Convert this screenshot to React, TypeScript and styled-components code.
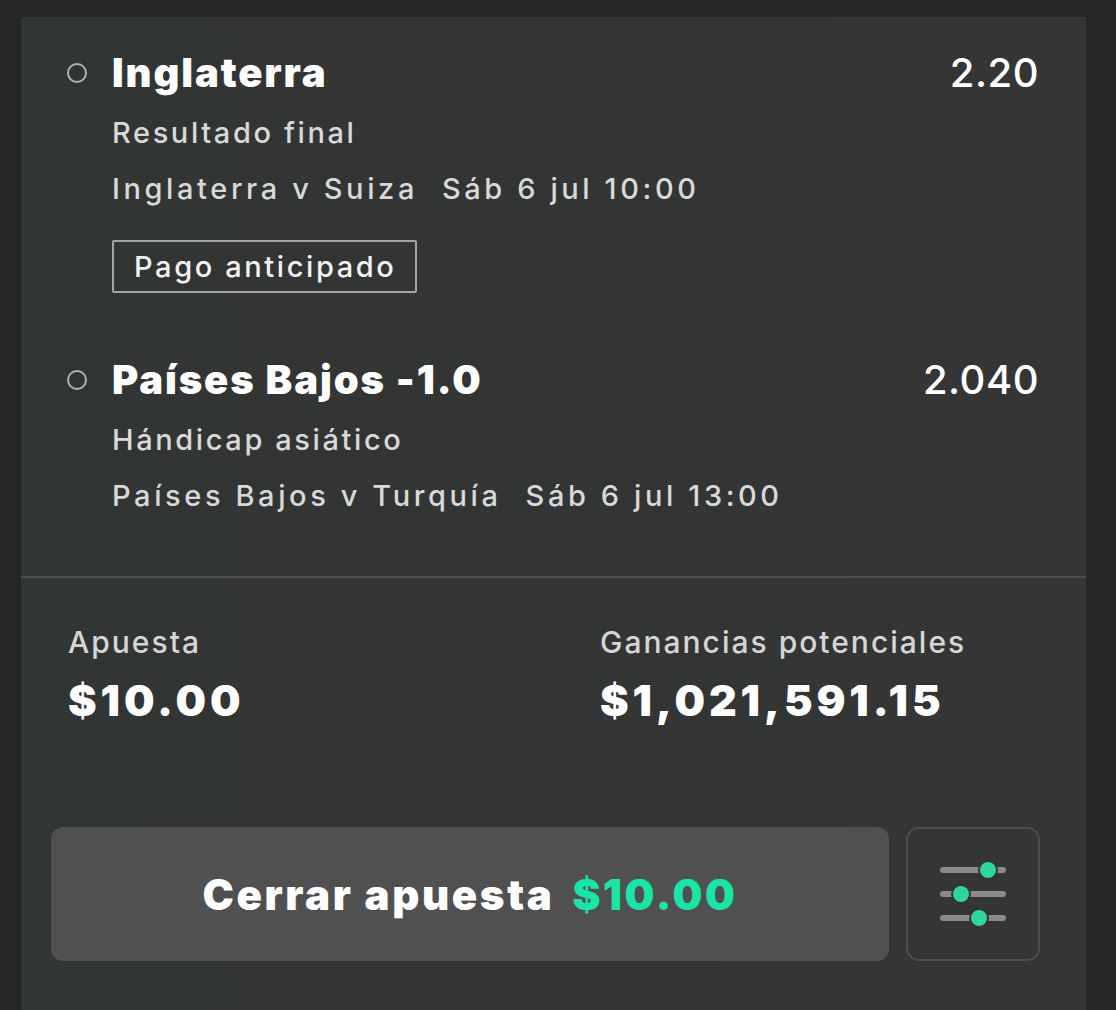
import styled, { createGlobalStyle } from 'styled-components';

// Data for the bet slip
interface Selection {
  name: string;
  odds: string;
  market: string;
  match: string;
  kickoff: string;
  tag?: string;
}

const selections: Selection[] = [
  {
    name: 'Inglaterra',
    odds: '2.20',
    market: 'Resultado final',
    match: 'Inglaterra v Suiza',
    kickoff: 'Sáb 6 jul 10:00',
    tag: 'Pago anticipado',
  },
  {
    name: 'Países Bajos -1.0',
    odds: '2.040',
    market: 'Hándicap asiático',
    match: 'Países Bajos v Turquía',
    kickoff: 'Sáb 6 jul 13:00',
  },
];

const GlobalStyle = createGlobalStyle`
  html, body {
    margin: 0;
    padding: 0;
    background: #262626;
  }
  body {
    font-family: Inter, "Noto Sans", "Liberation Sans", sans-serif;
    color: #ffffff;
    -webkit-font-smoothing: antialiased;
  }
`;

// Styled Components
const Page = styled.div`
  padding: 17px 30px 0 21px;
  height: 1010px;
  box-sizing: border-box;
  overflow: hidden;
`;

const Panel = styled.div`
  width: 1065px;
  min-height: 993px;
  background: linear-gradient(90deg, #313534 0%, #333534 60%, #353535 100%);
`;

const SelectionList = styled.div`
  padding: 32px 47px 52px 46px;
  display: flex;
  flex-direction: column;
  gap: 63px;
`;

const SelectionItem = styled.div`
  display: grid;
  grid-template-columns: 20px 1fr auto;
  column-gap: 25px;
`;

const Radio = styled.span`
  width: 20px;
  height: 20px;
  box-sizing: border-box;
  border: 2.5px solid #b2b2b2;
  border-radius: 50%;
  align-self: center;
`;

const Title = styled.div`
  font-size: 40px;
  line-height: 48px;
  font-weight: 900;
  letter-spacing: 1.9px;
`;

const Odds = styled.div`
  font-size: 40px;
  line-height: 48px;
  font-weight: 500;
  letter-spacing: 0.5px;
`;

const Details = styled.div`
  grid-column: 2 / 4;
  margin-top: 8px;
  display: flex;
  flex-direction: column;
  align-items: flex-start;
`;

const InfoLine = styled.div<{ $wide?: boolean }>`
  font-size: 29px;
  line-height: 56px;
  font-weight: 500;
  color: #d9d9d9;
  letter-spacing: ${(p) => (p.$wide ? '3.6px' : '2.6px')};
  display: flex;
  gap: 24px;
`;

const Tag = styled.span`
  margin-top: 23px;
  border: 2px solid #a3a3a3;
  border-radius: 2px;
  padding: 6px 19px 6px 20px;
  font-size: 29px;
  line-height: 37px;
  font-weight: 500;
  color: #f2f2f2;
  letter-spacing: 2.6px;
`;

const Divider = styled.hr`
  margin: 0;
  border: none;
  height: 2px;
  background: #4b4e4d;
`;

const Summary = styled.div`
  display: grid;
  grid-template-columns: 532px 1fr;
  padding: 44px 47px 0;
`;

const SummaryCell = styled.div`
  display: flex;
  flex-direction: column;
  gap: 13px;
`;

const Label = styled.div`
  font-size: 30px;
  line-height: 40px;
  font-weight: 500;
  color: #d6d6d6;
  letter-spacing: 2px;
`;

const Amount = styled.div`
  font-size: 43px;
  line-height: 51px;
  font-weight: 900;
  letter-spacing: 3.9px;
`;

const Actions = styled.div`
  display: flex;
  gap: 17px;
  padding: 101px 46px 0 30px;
`;

const CashOutButton = styled.button`
  flex: 1;
  height: 134px;
  border: none;
  border-radius: 12px;
  background: #505050;
  color: #ffffff;
  font-family: inherit;
  font-size: 42px;
  font-weight: 900;
  letter-spacing: 2.6px;
  display: flex;
  align-items: center;
  justify-content: center;
  gap: 18px;
  cursor: pointer;
`;

const Green = styled.span`
  color: #19e6a6;
`;

const SettingsButton = styled.button`
  width: 134px;
  height: 134px;
  box-sizing: border-box;
  border: 2px solid #4c4c4c;
  border-radius: 13px;
  background: transparent;
  display: flex;
  align-items: center;
  justify-content: center;
  padding: 0;
  cursor: pointer;
`;

function SlidersIcon() {
  const rows = [
    { y: 8, x: 50 },
    { y: 32, x: 23 },
    { y: 56, x: 41 },
  ];
  return (
    <svg width="70" height="64" viewBox="0 0 70 64">
      {rows.map((r) => (
        <g key={r.y}>
          <line x1="5" y1={r.y} x2="65" y2={r.y} stroke="#8a8a8a" strokeWidth="6" strokeLinecap="round" />
          <circle cx={r.x} cy={r.y} r="9" fill="#2fd69a" stroke="#343434" strokeWidth="2" />
        </g>
      ))}
    </svg>
  );
}

function SelectionRow({ item }: { item: Selection }) {
  return (
    <SelectionItem>
      <Radio />
      <Title>{item.name}</Title>
      <Odds>{item.odds}</Odds>
      <Details>
        <InfoLine>{item.market}</InfoLine>
        <InfoLine $wide>
          <span>{item.match}</span>
          <span>{item.kickoff}</span>
        </InfoLine>
        {item.tag && <Tag>{item.tag}</Tag>}
      </Details>
    </SelectionItem>
  );
}

export default function App() {
  return (
    <>
      <GlobalStyle />
      <Page>
        <Panel>
          <SelectionList>
            {selections.map((s) => (
              <SelectionRow key={s.name} item={s} />
            ))}
          </SelectionList>
          <Divider />
          <Summary>
            <SummaryCell>
              <Label>Apuesta</Label>
              <Amount>$10.00</Amount>
            </SummaryCell>
            <SummaryCell>
              <Label>Ganancias potenciales</Label>
              <Amount>$1,021,591.15</Amount>
            </SummaryCell>
          </Summary>
          <Actions>
            <CashOutButton>
              <span>Cerrar apuesta</span>
              <Green>$10.00</Green>
            </CashOutButton>
            <SettingsButton aria-label="Ajustes">
              <SlidersIcon />
            </SettingsButton>
          </Actions>
        </Panel>
      </Page>
    </>
  );
}
